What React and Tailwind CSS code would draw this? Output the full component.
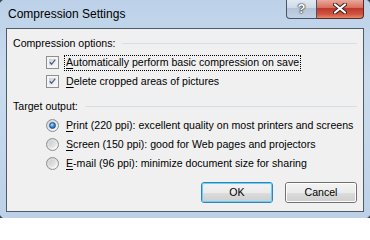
import React from 'react';

const font = { fontFamily: '"Liberation Sans", Arial, sans-serif' };

function CheckBox() {
  return (
    <div className="w-[13px] h-[13px] shrink-0 border border-[#8e8f8f] bg-[#f4f4f4] p-[2px]">
      <div className="w-full h-full bg-[linear-gradient(135deg,#c9ccd2_0%,#e9eaec_60%,#f7f7f7_100%)] flex items-center justify-center">
        <svg width="9" height="9" viewBox="0 0 9 9">
          <path d="M1 4.2 L3.3 6.8 L8 0.8" fill="none" stroke="#4b5f8c" strokeWidth="1.7" />
        </svg>
      </div>
    </div>
  );
}

function Radio({ checked }) {
  return (
    <div className="w-[13px] h-[13px] shrink-0 rounded-full border border-[#8e8f8f] bg-[radial-gradient(circle_at_65%_70%,#ffffff_0%,#d7d8da_70%,#c4c6c9_100%)] flex items-center justify-center">
      {checked ? (
        <div className="w-[7px] h-[7px] rounded-full bg-[radial-gradient(circle_at_40%_35%,#bfe5fb_0%,#3d8ed6_45%,#0f3f86_100%)] border border-[#1b4f8e]" />
      ) : (
        <div className="w-[7px] h-[7px] rounded-full bg-[linear-gradient(135deg,#c8cacd,#eeeeef)]" />
      )}
    </div>
  );
}

function GroupHeader({ children }) {
  return (
    <div className="flex items-center h-[15px]">
      <span>{children}</span>
      <div className="flex-1 ml-[7px] h-px bg-[#d5dfe5]" />
    </div>
  );
}

function U({ children }) {
  return <span className="underline underline-offset-[2px]">{children}</span>;
}

function Btn({ children, primary }) {
  return (
    <div
      className={
        'w-[72px] h-[21px] rounded-[3px] border flex ' +
        (primary ? 'border-[#3c7fb1]' : 'border-[#707070]')
      }
    >
      <div
        className={
          'flex-1 rounded-[2px] border flex items-center justify-center bg-[linear-gradient(180deg,#f2f2f2_0%,#ebebeb_50%,#dddddd_51%,#cfcfcf_100%)] ' +
          (primary ? 'border-[#5fd3f8] shadow-[inset_0_0_1px_#b6ecfc]' : 'border-[#fcfcfc]')
        }
      >
        {children}
      </div>
    </div>
  );
}

export default function App() {
  return (
    <div className="w-[370px] h-[218px] overflow-hidden bg-[#3a4754]" style={font}>
      <div className="m-[-1px] w-[372px] h-[220px] rounded-[8px] bg-[linear-gradient(180deg,#bcd1e8_0%,#cadbee_35%,#c3d6eb_70%,#bcd0e7_100%)] flex flex-col">
        {/* title bar */}
        <div className="h-[29px] flex items-start justify-between pl-[9px] pr-[7px]">
          <span className="text-[12px] leading-none mt-[9px] text-black">Compression Settings</span>
          <div className="flex">
            <div className="w-[31px] h-[20px] border border-t-0 border-[#45546a] rounded-bl-[4px] bg-[linear-gradient(180deg,#e3eaf3_0%,#cfdbe8_45%,#b4c4d7_50%,#c3d3e4_100%)] flex items-center justify-center">
              <span className="text-white font-bold text-[13px] leading-none [text-shadow:0_0_1px_#222,0_0_1px_#222,0_0_2px_#333]">?</span>
            </div>
            <div className="w-[47px] h-[20px] border border-t-0 border-l-0 border-[#5a2a26] rounded-br-[4px] bg-[linear-gradient(180deg,#eab0a3_0%,#d9705e_45%,#c0382a_50%,#cf5440_80%,#e58a6c_100%)] flex items-center justify-center">
              <svg width="14" height="11" viewBox="0 0 14 11">
                <path d="M2 1.5 L12 9.5 M12 1.5 L2 9.5" stroke="#3a2320" strokeWidth="4" strokeLinecap="round" />
                <path d="M2 1.5 L12 9.5 M12 1.5 L2 9.5" stroke="#ffffff" strokeWidth="2.2" strokeLinecap="round" />
              </svg>
            </div>
          </div>
        </div>

        {/* client area */}
        <div className="mx-[7px] h-[184px] border border-[#515b66] bg-[#f0f0f0] text-[10.6px] text-black flex flex-col px-[6px] pt-[7px]">
          <GroupHeader>Compression options:</GroupHeader>
          <div className="mt-[2px] flex flex-col">
            <div className="h-[19px] flex items-center pl-[33px]">
              <CheckBox />
              <span className="ml-[5px] px-px h-[16px] flex items-center border border-dotted border-black">
                <U>A</U>utomatically perform basic compression on save
              </span>
            </div>
            <div className="h-[19px] flex items-center pl-[33px]">
              <CheckBox />
              <span className="ml-[6px] px-px">
                <U>D</U>elete cropped areas of pictures
              </span>
            </div>
          </div>

          <div className="mt-[8px]">
            <GroupHeader>Target output:</GroupHeader>
          </div>
          <div className="mt-[2px] flex flex-col">
            <div className="h-[19px] flex items-center pl-[33px]">
              <Radio checked />
              <span className="ml-[6px] px-px">
                <U>P</U>rint (220 ppi): excellent quality on most printers and screens
              </span>
            </div>
            <div className="h-[19px] flex items-center pl-[33px]">
              <Radio />
              <span className="ml-[6px] px-px">
                <U>S</U>creen (150 ppi): good for Web pages and projectors
              </span>
            </div>
            <div className="h-[19px] flex items-center pl-[33px]">
              <Radio />
              <span className="ml-[6px] px-px">
                <U>E</U>-mail (96 ppi): minimize document size for sharing
              </span>
            </div>
          </div>

          <div className="mt-[9px] flex justify-end gap-[12px]">
            <Btn primary>OK</Btn>
            <Btn>Cancel</Btn>
          </div>
        </div>
      </div>
    </div>
  );
}
